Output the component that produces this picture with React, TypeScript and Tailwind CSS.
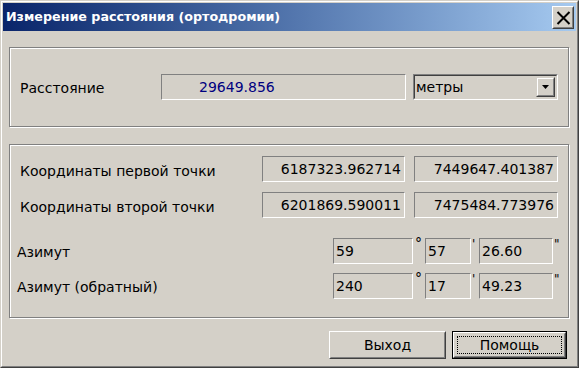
import React from "react";

const font = { fontFamily: '"DejaVu Sans", Verdana, sans-serif' };

function Field({ w, children, align = "left", className = "" }: { w: string; children?: React.ReactNode; align?: "left" | "right"; className?: string }) {
  return (
    <div
      className={`${w} h-[26px] flex items-center pt-px border border-t-[#808080] border-l-[#808080] border-b-white border-r-white text-[14px] text-black ${align === "right" ? "justify-end pr-[3px]" : "pl-[2px]"} ${className}`}
    >
      {children}
    </div>
  );
}

function Button({ label, isDefault }: { label: string; isDefault?: boolean }) {
  if (isDefault) {
    return (
      <div className="w-[115px] h-[28px] border border-black">
        <div className="w-full h-full border border-t-white border-l-white border-b-[#404040] border-r-[#404040]">
          <div className="w-full h-full border border-t-[#d4d0c8] border-l-[#d4d0c8] border-b-[#808080] border-r-[#808080] p-[2px]">
            <div className="w-full h-full border border-dotted border-black flex items-center justify-center text-[14px] text-black">
              {label}
            </div>
          </div>
        </div>
      </div>
    );
  }
  return (
    <div className="w-[117px] h-[28px] border border-t-white border-l-white border-b-[#404040] border-r-[#404040]">
      <div className="w-full h-full border border-t-[#d4d0c8] border-l-[#d4d0c8] border-b-[#808080] border-r-[#808080] flex items-center justify-center text-[14px] text-black">
        {label}
      </div>
    </div>
  );
}

export default function App() {
  return (
    <div style={font} className="w-[579px] h-[368px] bg-[#d4d0c8] border border-t-[#d4d0c8] border-l-[#d4d0c8] border-b-[#404040] border-r-[#404040]">
      <div className="w-full h-full border border-t-white border-l-white border-b-[#808080] border-r-[#808080] p-px flex flex-col">
        {/* Title bar */}
        <div className="h-[28px] bg-gradient-to-r from-[#0a246a] to-[#a6caf0] flex items-center justify-between pl-[3px] pr-[2px]">
          <span className="text-white font-bold text-[12.7px] leading-none">Измерение расстояния (ортодромии)</span>
          <div className="w-[22px] h-[23px] mt-[1px] bg-[#d4d0c8] border border-t-white border-l-white border-b-[#404040] border-r-[#404040]">
            <div className="w-full h-full border border-t-[#d4d0c8] border-l-[#d4d0c8] border-b-[#808080] border-r-[#808080] flex items-center justify-center">
              <svg width="15" height="14" viewBox="0 0 15 14">
                <path d="M1.5 1 L13.5 13 M13.5 1 L1.5 13" stroke="#000" strokeWidth="2" />
              </svg>
            </div>
          </div>
        </div>

        {/* Group 1 */}
        <div className="ml-[6px] mt-[16px] w-[560px] h-[80px] border border-[#808080] shadow-[inset_1px_1px_0_#fff,1px_1px_0_#fff] pt-[26px] pl-[7px]">
          <div className="flex items-center h-[26px]">
            <div className="w-[144px] pl-[3px] pt-[3px] text-[14px] text-black">Расстояние</div>
            <Field w="w-[245px]" className="pl-[37px]">
              <span className="text-[#000080]">29649.856</span>
            </Field>
            <div className="ml-[7px] w-[145px] h-[26px] border border-t-[#808080] border-l-[#808080] border-b-white border-r-white">
              <div className="w-full h-full border border-t-[#404040] border-l-[#404040] border-b-[#d4d0c8] border-r-[#d4d0c8] flex items-center justify-between">
                <span className="pl-px text-[14px] text-black">метры</span>
                <div className="w-[19px] h-[20px] mr-px border border-t-[#d4d0c8] border-l-[#d4d0c8] border-b-[#404040] border-r-[#404040]">
                  <div className="w-full h-full border border-t-white border-l-white border-b-[#808080] border-r-[#808080] flex items-center justify-center">
                    <svg width="7" height="4" viewBox="0 0 7 4">
                      <path d="M0 0 H7 L3.5 4 Z" fill="#000" />
                    </svg>
                  </div>
                </div>
              </div>
            </div>
          </div>
        </div>

        {/* Group 2 */}
        <div className="ml-[6px] mt-[17px] w-[560px] h-[174px] border border-[#808080] shadow-[inset_1px_1px_0_#fff,1px_1px_0_#fff] pt-[11px] pl-[7px] flex flex-col">
          <div className="flex items-center h-[26px]">
            <div className="w-[245px] pl-[3px] pt-[4px] text-[14px] text-black">Координаты первой точки</div>
            <Field w="w-[143px]" align="right">6187323.962714</Field>
            <Field w="w-[144px]" align="right" className="ml-[9px]">7449647.401387</Field>
          </div>
          <div className="flex items-center h-[26px] mt-[10px]">
            <div className="w-[245px] pl-[3px] pt-[4px] text-[14px] text-black">Координаты второй точки</div>
            <Field w="w-[143px]" align="right">6201869.590011</Field>
            <Field w="w-[144px]" align="right" className="ml-[9px]">7475484.773976</Field>
          </div>
          {[
            ["Азимут", "59", "57", "26.60"],
            ["Азимут (обратный)", "240", "17", "49.23"],
          ].map(([label, d, m, s], i) => (
            <div key={label} className={`flex items-center h-[26px] ${i === 0 ? "mt-[20px]" : "mt-[9px]"}`}>
              <div className="w-[316px] pt-[3px] text-[14px] text-black">{label}</div>
              <Field w="w-[80px]">{d}</Field>
              <div className="w-[12px] h-full relative">
                <span className="absolute left-[2px] top-[-5px] text-[14px] text-black">°</span>
              </div>
              <Field w="w-[46px]">{m}</Field>
              <div className="w-[8px] h-full relative">
                <span className="absolute left-[1px] top-[-3px] text-[12px] text-black">'</span>
              </div>
              <Field w="w-[74px]">{s}</Field>
              <div className="w-[8px] h-full relative">
                <span className="absolute left-[1px] top-[-3px] text-[12px] text-black">"</span>
              </div>
            </div>
          ))}
        </div>

        {/* Buttons */}
        <div className="mt-[13px] flex pl-[326px] gap-[6px]">
          <Button label="Выход" />
          <Button label="Помощь" isDefault />
        </div>
      </div>
    </div>
  );
}
